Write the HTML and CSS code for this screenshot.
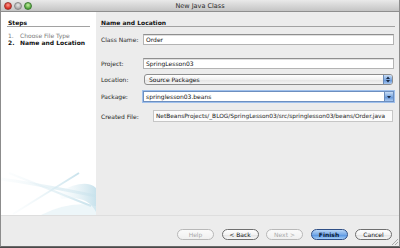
FILE: index.html
```html
<!DOCTYPE html>
<html>
<head>
<meta charset="utf-8">
<link rel="stylesheet" href="styles.css">
</head>
<body>
<div class="window">
  <div class="titlebar">
    <div class="lights">
      <span class="light red"></span>
      <span class="light gray"></span>
      <span class="light green"></span>
    </div>
    <div class="title">New Java Class</div>
    <div></div>
  </div>
  <div class="main">
    <div class="steps">
      <div class="heading">Steps</div>
      <ol class="steplist">
        <li class="done"><span class="num">1.</span>Choose File Type</li>
        <li class="current"><span class="num">2.</span>Name and Location</li>
      </ol>
      <svg class="swoosh" width="95" height="45" viewBox="0 0 95 45">
        <defs>
          <linearGradient id="fade" x1="0" y1="0" x2="1" y2="0">
            <stop offset="0" stop-color="#eef6f9" stop-opacity="0.2"/>
            <stop offset="1" stop-color="#c8e2ec"/>
          </linearGradient>
        </defs>
        <path d="M0 9 C30 13 60 19 95 26" stroke="url(#fade)" stroke-width="3" fill="none"/>
        <path d="M8 3 L90 36" stroke="url(#fade)" stroke-width="2" fill="none"/>
        <path d="M12 44 L78 3" stroke="url(#fade)" stroke-width="2" fill="none"/>
        <path d="M58 22 Q84 8 95 18 L95 42 Q86 24 60 29 Z" fill="url(#fade)"/>
        <path d="M40 45 Q70 30 95 36 L95 45 Z" fill="#dcedf3" opacity="0.5"/>
      </svg>
    </div>
    <div class="content">
      <div class="heading">Name and Location</div>
      <div class="row r-class">
        <label>Class Name:</label>
        <div class="field">Order</div>
      </div>
      <div class="row r-project">
        <label>Project:</label>
        <div class="field">SpringLesson03</div>
      </div>
      <div class="row r-location">
        <label>Location:</label>
        <div class="popup">Source Packages<span class="arrows"><svg width="6" height="9" viewBox="0 0 6 9"><path d="M1 4 L3 1.5 L5 4 Z M1 5 L3 7.5 L5 5 Z" fill="#1a2a44"/></svg></span></div>
      </div>
      <div class="row r-package">
        <label>Package:</label>
        <div class="combo">springlesson03.beans<span class="arrowbtn"><svg width="6" height="6" viewBox="0 0 6 6"><path d="M1 2 L3 4.5 L5 2 Z" fill="#1a2a44"/></svg></span></div>
      </div>
      <div class="row r-created">
        <label>Created File:</label>
        <div class="field ro">NetBeansProjects/_BLOG/SpringLesson03/src/springlesson03/beans/Order.java</div>
      </div>
    </div>
  </div>
  <div class="footer">
    <button class="btn disabled">Help</button>
    <button class="btn">&lt; Back</button>
    <button class="btn disabled">Next &gt;</button>
    <button class="btn default">Finish</button>
    <button class="btn">Cancel</button>
    <svg class="grip" width="7" height="7" viewBox="0 0 7 7"><path d="M7 1 L1 7 M7 4 L4 7" stroke="#999" stroke-width="0.8"/></svg>
  </div>
</div>
</body>
</html>
```

FILE: styles.css
```css
html, body {
  margin: 0;
  padding: 0;
  background: #4a4a4a;
}
body {
  width: 400px;
  height: 248px;
  overflow: hidden;
  font-family: "DejaVu Sans", "Liberation Sans", sans-serif;
  font-size: 6px;
  color: #111;
}
.window {
  position: relative;
  width: 398px;
  height: 246px;
  border-left: 1px solid #8c8c8c;
  border-right: 1px solid #8c8c8c;
  border-bottom: 1px solid #6a6a6a;
  display: flex;
  flex-direction: column;
  background: #ececec;
}
.titlebar {
  height: 11px;
  border-bottom: 1px solid #8e8e8e;
  background: linear-gradient(#e9e9e9, #c4c4c4);
  display: grid;
  grid-template-columns: 1fr auto 1fr;
  align-items: center;
}
.lights {
  display: flex;
  gap: 2px;
  padding-left: 3px;
}
.light {
  width: 8px;
  height: 8px;
  border-radius: 50%;
  box-sizing: border-box;
}
.red { background: radial-gradient(circle at 50% 35%, #ff9a8f, #d8261c 70%); border: 0.5px solid #9b3a33; }
.gray { background: radial-gradient(circle at 50% 35%, #e8e8e8, #a9a9a9 70%); border: 0.5px solid #8a8a8a; }
.green { background: radial-gradient(circle at 50% 35%, #c5f0a0, #4fa43a 70%); border: 0.5px solid #3d7a33; }
.title {
  font-size: 6.5px;
  color: #2a2a2a;
  text-align: center;
}
.main {
  display: flex;
  height: 203px;
}
.steps {
  width: 95px;
  background: #fff;
  padding: 0 6px 0 6px;
  box-sizing: border-box;
  display: flex;
  flex-direction: column;
  position: relative;
}
.heading {
  font-weight: bold;
  padding-top: 7px;
  line-height: 7px;
  height: 7px;
  border-bottom: 1px solid #a2a2a2;
}
.steps .heading {
  padding-left: 1px;
}
.steplist {
  list-style: none;
  margin: 5px 0 0 0;
  padding: 0 0 0 1px;
}
.steplist li {
  line-height: 7px;
  white-space: nowrap;
}
.steplist .num {
  display: inline-block;
  width: 12px;
}
.steplist .done { color: #7a7a7a; }
.steplist .current { font-weight: bold; color: #111; }
.swoosh {
  margin: auto -6px 0 -6px;
  display: block;
}
.content {
  flex: 1;
  padding: 0 4px 0 4px;
  display: flex;
  flex-direction: column;
}
.content .heading {
  padding-left: 1px;
}
.row {
  display: flex;
  align-items: center;
  padding-left: 1px;
  padding-right: 1px;
}
.row label {
  width: 42px;
  flex: none;
  color: #262626;
  white-space: nowrap;
}
.r-class { margin-top: 7px; }
.r-project { margin-top: 13px; }
.r-location { margin-top: 5px; }
.r-package { margin-top: 6px; }
.r-created { margin-top: 8px; }
.field {
  flex: 1;
  height: 11px;
  box-sizing: border-box;
  background: #fff;
  border: 1px solid #b3b3b3;
  border-top-color: #8f8f8f;
  box-shadow: inset 0 1px 0 #e0e0e0;
  padding-left: 2px;
  line-height: 9px;
  white-space: nowrap;
  overflow: hidden;
}
.field.ro {
  height: 12px;
  line-height: 10px;
  background: #fbfbfb;
  border: 1px solid #c6c6c6;
  box-shadow: none;
  padding-left: 2px;
  margin-left: 10px;
  margin-right: 1px;
  color: #222;
  font-size: 5.85px;
}
.popup {
  flex: 1;
  margin-left: 1px;
  margin-right: 1px;
  height: 11px;
  box-sizing: border-box;
  border: 1px solid #8d8d8d;
  border-radius: 3px;
  background: linear-gradient(#ffffff, #f1f1f1 50%, #e3e3e3 51%, #f4f4f4);
  padding-left: 4px;
  line-height: 9px;
  display: flex;
  justify-content: space-between;
  overflow: hidden;
}
.arrows {
  width: 8px;
  height: 9px;
  background: linear-gradient(#c9def6, #7fa9e0 50%, #5b8fd6 51%, #a9c8f0);
  border-left: 1px solid #6a8bb8;
  display: flex;
  align-items: center;
  justify-content: center;
}
.combo {
  flex: 1;
  height: 11px;
  box-sizing: border-box;
  border: 1px solid #6d8fc0;
  box-shadow: 0 0 0 1px #9fc0ec;
  background: #fff;
  padding-left: 2px;
  line-height: 9px;
  display: flex;
  justify-content: space-between;
}
.arrowbtn {
  width: 8px;
  height: 9px;
  background: linear-gradient(#c9def6, #7fa9e0 50%, #5b8fd6 51%, #a9c8f0);
  border-left: 1px solid #6a8bb8;
  display: flex;
  align-items: center;
  justify-content: center;
}
.footer {
  flex: 1;
  border-top: 1px solid #dedede;
  display: flex;
  justify-content: flex-end;
  align-items: flex-start;
  gap: 7.5px;
  padding: 13px 7px 0 0;
  position: relative;
}
.btn {
  width: 37px;
  height: 11px;
  box-sizing: border-box;
  padding: 0;
  margin: 0;
  border-radius: 6px;
  border: 1px solid #6f6f6f;
  background: linear-gradient(#ffffff, #f3f3f3 50%, #e2e2e2 51%, #f7f7f7);
  font-family: "DejaVu Sans", "Liberation Sans", sans-serif;
  font-size: 6px;
  line-height: 9px;
  color: #111;
}
.btn.disabled {
  border-color: #b8b8b8;
  color: #a8a8a8;
  background: linear-gradient(#fafafa, #f0f0f0);
}
.btn.default {
  border-color: #2f4f86;
  background: linear-gradient(#b9d6f6, #77aae8 50%, #4e8ee0 51%, #a4cdf6);
  color: #0b1a33;
  font-weight: bold;
}
.grip {
  position: absolute;
  right: 1px;
  bottom: 1px;
}
```
